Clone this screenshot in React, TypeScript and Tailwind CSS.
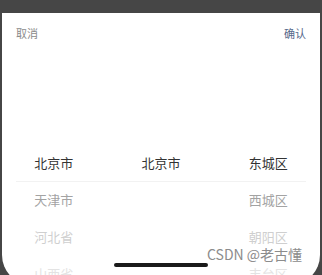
import React from 'react';

const columns = [
  ['北京市', '天津市', '河北省', '山西省'],
  ['北京市'],
  ['东城区', '西城区', '朝阳区', '丰台区'],
];

const rowColors = ['text-[#333333]', 'text-[#a3a3a3]', 'text-[#cfcfcf]', 'text-[#e3e3e3]'];

export default function App() {
  return (
    <div
      className="relative w-[322px] h-[275px] overflow-hidden bg-[#464646]"
      style={{ fontFamily: '"Noto Sans CJK SC", "Noto Sans", sans-serif' }}
    >
      <div className="h-[13px]" />
      <div className="mx-[2px] h-[272px] bg-white rounded-b-[30px] overflow-hidden">
        <div className="flex items-center justify-between h-[40px] px-[14px] text-[11px]">
          <span className="text-[#8a8a8a]">取消</span>
          <span className="text-[#56688a]">确认</span>
        </div>
        <div className="h-[91px]" />
        <div className="relative -mx-[2px]">
          <div className="absolute left-[16px] right-[16px] top-[37px] h-px bg-[#f2f2f2]" />
          <div className="grid grid-cols-3">
            {columns.map((col, ci) => (
              <div key={ci} className="flex flex-col">
                {col.map((name, ri) => (
                  <div
                    key={name + ri}
                    className={`h-[37px] flex items-center justify-center text-[13px] ${rowColors[ri]}`}
                  >
                    {name}
                  </div>
                ))}
              </div>
            ))}
          </div>
        </div>
      </div>
      <div className="absolute left-[114px] top-[263px] w-[94px] h-[4px] rounded-full bg-[#1a1a1a]" />
      <div className="absolute left-[207px] top-[245px] text-[14px] leading-[18px] text-[#8c8c8c]">
        CSDN @老古懂
      </div>
    </div>
  );
}
